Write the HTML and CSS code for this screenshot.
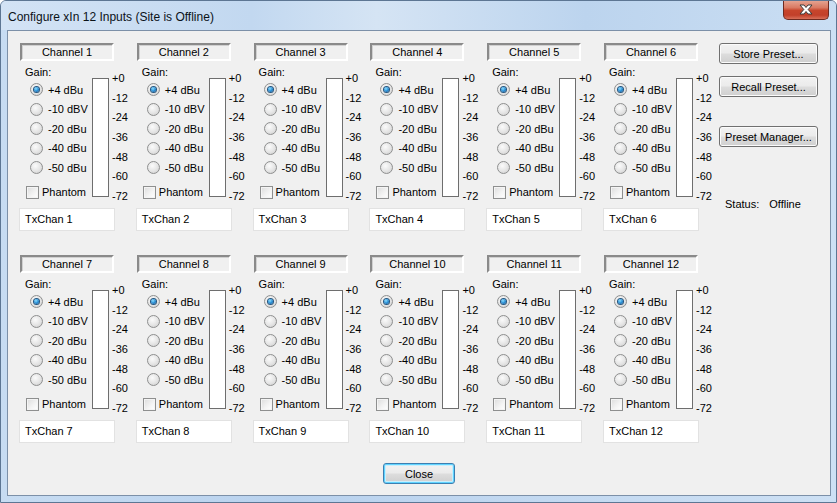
FILE: index.html
```html
<!DOCTYPE html>
<html lang="en">
<head>
    <meta charset="UTF-8">
    <title>Configure xIn 12 Inputs</title>
    <link rel="stylesheet" href="styles.css">
</head>
<body>
<div class="window">
    <div class="titlebar">
        <span class="title">Configure xIn 12 Inputs (Site is Offline)</span>
        <span class="close-x">
            <svg width="14" height="11" viewBox="0 0 14 11">
                <path d="M1 1 H5 L7 3.5 L9 1 H13 L9.2 5.5 L13 10 H9 L7 7.5 L5 10 H1 L4.8 5.5 Z" fill="#fff" stroke="#3a3a3a" stroke-width="1" stroke-linejoin="round"/>
            </svg>
        </span>
    </div>
    <div class="client">
        <div class="content">
            <div class="channels">

                <div class="channel">
                    <div class="ch-name">Channel 1</div>
                    <div class="ch-body">
                        <div class="gain">
                            <div class="gain-title">Gain:</div>
                            <div class="opt"><span class="radio on"></span>+4 dBu</div>
                            <div class="opt"><span class="radio"></span>-10 dBV</div>
                            <div class="opt"><span class="radio"></span>-20 dBu</div>
                            <div class="opt"><span class="radio"></span>-40 dBu</div>
                            <div class="opt"><span class="radio"></span>-50 dBu</div>
                            <div class="phantom"><span class="check"></span>Phantom</div>
                        </div>
                        <div class="meter"></div>
                        <div class="scale"><span>+0</span><span>-12</span><span>-24</span><span>-36</span><span>-48</span><span>-60</span><span>-72</span></div>
                    </div>
                    <div class="tx">TxChan 1</div>
                </div>

                <div class="channel">
                    <div class="ch-name">Channel 2</div>
                    <div class="ch-body">
                        <div class="gain">
                            <div class="gain-title">Gain:</div>
                            <div class="opt"><span class="radio on"></span>+4 dBu</div>
                            <div class="opt"><span class="radio"></span>-10 dBV</div>
                            <div class="opt"><span class="radio"></span>-20 dBu</div>
                            <div class="opt"><span class="radio"></span>-40 dBu</div>
                            <div class="opt"><span class="radio"></span>-50 dBu</div>
                            <div class="phantom"><span class="check"></span>Phantom</div>
                        </div>
                        <div class="meter"></div>
                        <div class="scale"><span>+0</span><span>-12</span><span>-24</span><span>-36</span><span>-48</span><span>-60</span><span>-72</span></div>
                    </div>
                    <div class="tx">TxChan 2</div>
                </div>

                <div class="channel">
                    <div class="ch-name">Channel 3</div>
                    <div class="ch-body">
                        <div class="gain">
                            <div class="gain-title">Gain:</div>
                            <div class="opt"><span class="radio on"></span>+4 dBu</div>
                            <div class="opt"><span class="radio"></span>-10 dBV</div>
                            <div class="opt"><span class="radio"></span>-20 dBu</div>
                            <div class="opt"><span class="radio"></span>-40 dBu</div>
                            <div class="opt"><span class="radio"></span>-50 dBu</div>
                            <div class="phantom"><span class="check"></span>Phantom</div>
                        </div>
                        <div class="meter"></div>
                        <div class="scale"><span>+0</span><span>-12</span><span>-24</span><span>-36</span><span>-48</span><span>-60</span><span>-72</span></div>
                    </div>
                    <div class="tx">TxChan 3</div>
                </div>

                <div class="channel">
                    <div class="ch-name">Channel 4</div>
                    <div class="ch-body">
                        <div class="gain">
                            <div class="gain-title">Gain:</div>
                            <div class="opt"><span class="radio on"></span>+4 dBu</div>
                            <div class="opt"><span class="radio"></span>-10 dBV</div>
                            <div class="opt"><span class="radio"></span>-20 dBu</div>
                            <div class="opt"><span class="radio"></span>-40 dBu</div>
                            <div class="opt"><span class="radio"></span>-50 dBu</div>
                            <div class="phantom"><span class="check"></span>Phantom</div>
                        </div>
                        <div class="meter"></div>
                        <div class="scale"><span>+0</span><span>-12</span><span>-24</span><span>-36</span><span>-48</span><span>-60</span><span>-72</span></div>
                    </div>
                    <div class="tx">TxChan 4</div>
                </div>

                <div class="channel">
                    <div class="ch-name">Channel 5</div>
                    <div class="ch-body">
                        <div class="gain">
                            <div class="gain-title">Gain:</div>
                            <div class="opt"><span class="radio on"></span>+4 dBu</div>
                            <div class="opt"><span class="radio"></span>-10 dBV</div>
                            <div class="opt"><span class="radio"></span>-20 dBu</div>
                            <div class="opt"><span class="radio"></span>-40 dBu</div>
                            <div class="opt"><span class="radio"></span>-50 dBu</div>
                            <div class="phantom"><span class="check"></span>Phantom</div>
                        </div>
                        <div class="meter"></div>
                        <div class="scale"><span>+0</span><span>-12</span><span>-24</span><span>-36</span><span>-48</span><span>-60</span><span>-72</span></div>
                    </div>
                    <div class="tx">TxChan 5</div>
                </div>

                <div class="channel">
                    <div class="ch-name">Channel 6</div>
                    <div class="ch-body">
                        <div class="gain">
                            <div class="gain-title">Gain:</div>
                            <div class="opt"><span class="radio on"></span>+4 dBu</div>
                            <div class="opt"><span class="radio"></span>-10 dBV</div>
                            <div class="opt"><span class="radio"></span>-20 dBu</div>
                            <div class="opt"><span class="radio"></span>-40 dBu</div>
                            <div class="opt"><span class="radio"></span>-50 dBu</div>
                            <div class="phantom"><span class="check"></span>Phantom</div>
                        </div>
                        <div class="meter"></div>
                        <div class="scale"><span>+0</span><span>-12</span><span>-24</span><span>-36</span><span>-48</span><span>-60</span><span>-72</span></div>
                    </div>
                    <div class="tx">TxChan 6</div>
                </div>

                <div class="channel">
                    <div class="ch-name">Channel 7</div>
                    <div class="ch-body">
                        <div class="gain">
                            <div class="gain-title">Gain:</div>
                            <div class="opt"><span class="radio on"></span>+4 dBu</div>
                            <div class="opt"><span class="radio"></span>-10 dBV</div>
                            <div class="opt"><span class="radio"></span>-20 dBu</div>
                            <div class="opt"><span class="radio"></span>-40 dBu</div>
                            <div class="opt"><span class="radio"></span>-50 dBu</div>
                            <div class="phantom"><span class="check"></span>Phantom</div>
                        </div>
                        <div class="meter"></div>
                        <div class="scale"><span>+0</span><span>-12</span><span>-24</span><span>-36</span><span>-48</span><span>-60</span><span>-72</span></div>
                    </div>
                    <div class="tx">TxChan 7</div>
                </div>

                <div class="channel">
                    <div class="ch-name">Channel 8</div>
                    <div class="ch-body">
                        <div class="gain">
                            <div class="gain-title">Gain:</div>
                            <div class="opt"><span class="radio on"></span>+4 dBu</div>
                            <div class="opt"><span class="radio"></span>-10 dBV</div>
                            <div class="opt"><span class="radio"></span>-20 dBu</div>
                            <div class="opt"><span class="radio"></span>-40 dBu</div>
                            <div class="opt"><span class="radio"></span>-50 dBu</div>
                            <div class="phantom"><span class="check"></span>Phantom</div>
                        </div>
                        <div class="meter"></div>
                        <div class="scale"><span>+0</span><span>-12</span><span>-24</span><span>-36</span><span>-48</span><span>-60</span><span>-72</span></div>
                    </div>
                    <div class="tx">TxChan 8</div>
                </div>

                <div class="channel">
                    <div class="ch-name">Channel 9</div>
                    <div class="ch-body">
                        <div class="gain">
                            <div class="gain-title">Gain:</div>
                            <div class="opt"><span class="radio on"></span>+4 dBu</div>
                            <div class="opt"><span class="radio"></span>-10 dBV</div>
                            <div class="opt"><span class="radio"></span>-20 dBu</div>
                            <div class="opt"><span class="radio"></span>-40 dBu</div>
                            <div class="opt"><span class="radio"></span>-50 dBu</div>
                            <div class="phantom"><span class="check"></span>Phantom</div>
                        </div>
                        <div class="meter"></div>
                        <div class="scale"><span>+0</span><span>-12</span><span>-24</span><span>-36</span><span>-48</span><span>-60</span><span>-72</span></div>
                    </div>
                    <div class="tx">TxChan 9</div>
                </div>

                <div class="channel">
                    <div class="ch-name">Channel 10</div>
                    <div class="ch-body">
                        <div class="gain">
                            <div class="gain-title">Gain:</div>
                            <div class="opt"><span class="radio on"></span>+4 dBu</div>
                            <div class="opt"><span class="radio"></span>-10 dBV</div>
                            <div class="opt"><span class="radio"></span>-20 dBu</div>
                            <div class="opt"><span class="radio"></span>-40 dBu</div>
                            <div class="opt"><span class="radio"></span>-50 dBu</div>
                            <div class="phantom"><span class="check"></span>Phantom</div>
                        </div>
                        <div class="meter"></div>
                        <div class="scale"><span>+0</span><span>-12</span><span>-24</span><span>-36</span><span>-48</span><span>-60</span><span>-72</span></div>
                    </div>
                    <div class="tx">TxChan 10</div>
                </div>

                <div class="channel">
                    <div class="ch-name">Channel 11</div>
                    <div class="ch-body">
                        <div class="gain">
                            <div class="gain-title">Gain:</div>
                            <div class="opt"><span class="radio on"></span>+4 dBu</div>
                            <div class="opt"><span class="radio"></span>-10 dBV</div>
                            <div class="opt"><span class="radio"></span>-20 dBu</div>
                            <div class="opt"><span class="radio"></span>-40 dBu</div>
                            <div class="opt"><span class="radio"></span>-50 dBu</div>
                            <div class="phantom"><span class="check"></span>Phantom</div>
                        </div>
                        <div class="meter"></div>
                        <div class="scale"><span>+0</span><span>-12</span><span>-24</span><span>-36</span><span>-48</span><span>-60</span><span>-72</span></div>
                    </div>
                    <div class="tx">TxChan 11</div>
                </div>

                <div class="channel">
                    <div class="ch-name">Channel 12</div>
                    <div class="ch-body">
                        <div class="gain">
                            <div class="gain-title">Gain:</div>
                            <div class="opt"><span class="radio on"></span>+4 dBu</div>
                            <div class="opt"><span class="radio"></span>-10 dBV</div>
                            <div class="opt"><span class="radio"></span>-20 dBu</div>
                            <div class="opt"><span class="radio"></span>-40 dBu</div>
                            <div class="opt"><span class="radio"></span>-50 dBu</div>
                            <div class="phantom"><span class="check"></span>Phantom</div>
                        </div>
                        <div class="meter"></div>
                        <div class="scale"><span>+0</span><span>-12</span><span>-24</span><span>-36</span><span>-48</span><span>-60</span><span>-72</span></div>
                    </div>
                    <div class="tx">TxChan 12</div>
                </div>

            </div>
            <div class="side">
                <button class="btn">Store Preset...</button>
                <button class="btn recall">Recall Preset...</button>
                <button class="btn manager">Preset Manager...</button>
                <div class="status"><span>Status:</span><span>Offline</span></div>
            </div>
        </div>
        <div class="footer">
            <button class="btn default">Close</button>
        </div>
    </div>
</div>
</body>
</html>
```

FILE: styles.css
```css
body {
    margin: 0;
    font-family: "Liberation Sans", Arial, sans-serif;
    font-size: 11px;
    color: #000;
}
.window {
    width: 837px;
    height: 503px;
    box-sizing: border-box;
    border: 1px solid #5d7693;
    border-radius: 6px 6px 0 0;
    background: linear-gradient(90deg, #c7dcf2 0%, #b9d2ee 35%, #c3d9f1 65%, #cde0f4 100%);
    display: flex;
    flex-direction: column;
    overflow: hidden;
}
.titlebar {
    height: 29px;
    display: flex;
    align-items: flex-start;
    background: linear-gradient(90deg, #d3e3f5 0%, #c2d8f0 30%, #d5e4f4 45%, #bcd4ee 70%, #cadef3 100%);
}
.title {
    margin: 8px 0 0 7px;
    font-size: 12px;
    line-height: 16px;
    color: #0b1218;
}
.close-x {
    margin: -1px 7px 0 auto;
    width: 46px;
    height: 20px;
    box-sizing: border-box;
    border: 1px solid #6e2a20;
    border-top: none;
    border-radius: 0 0 5px 5px;
    background: linear-gradient(#e6a896 0%, #d97a63 40%, #c7452c 55%, #c2402a 80%, #d8705a 100%);
    display: flex;
    align-items: center;
    justify-content: center;
}
.client {
    margin: 0 5px 0 6px;
    height: 466px;
    box-sizing: border-box;
    border: 1px solid #7c90a8;
    background: #f0f0f0;
    display: flex;
    flex-direction: column;
}
.content {
    display: flex;
    padding: 12px 0 0 12px;
}
.channels {
    display: grid;
    grid-template-columns: repeat(6, 116.8px);
    row-gap: 24px;
    width: 699px;
    flex: none;
}
.channel {
    width: 97px;
}
.ch-name {
    width: 94px;
    height: 18px;
    box-sizing: border-box;
    border: 2px solid;
    border-color: #8a8a8a #fff #fff #8a8a8a;
    box-shadow: inset 1px 1px 0 #d0d0d0;
    text-align: center;
    line-height: 14px;
}
.ch-body {
    display: flex;
    height: 142px;
    margin-top: 5px;
    white-space: nowrap;
}
.ch-body > div {
    flex: none;
}
.gain {
    width: 72px;
}
.gain-title {
    height: 14px;
    line-height: 13px;
    padding-left: 5px;
}
.opt {
    height: 19.5px;
    display: flex;
    align-items: center;
    padding-left: 10px;
}
.radio {
    flex: none;
    width: 13px;
    height: 13px;
    box-sizing: border-box;
    border: 1px solid #8e8f8f;
    border-radius: 50%;
    background: radial-gradient(circle at 40% 35%, #fbfbfb 0%, #e4e4e4 55%, #c9c9c9 100%);
    margin-right: 5px;
    display: flex;
    align-items: center;
    justify-content: center;
}
.radio.on::after {
    content: "";
    width: 5px;
    height: 5px;
    border-radius: 50%;
    background: radial-gradient(circle at 40% 35%, #8ee0ff 0%, #2a8fd6 50%, #0d4e8c 100%);
    box-shadow: 0 0 0 1px #25567f;
}
.phantom {
    height: 15px;
    margin-top: 7px;
    display: flex;
    align-items: center;
    padding-left: 6px;
}
.check {
    flex: none;
    width: 13px;
    height: 13px;
    box-sizing: border-box;
    border: 1px solid #8e8f8f;
    background: linear-gradient(135deg, #dcdcdc 0%, #f4f4f4 60%, #fff 100%);
    box-shadow: inset 0 0 0 1px #f4f4f4;
    margin-right: 3px;
}
.meter {
    width: 17px;
    height: 119px;
    margin-top: 12px;
    box-sizing: border-box;
    border: 1px solid #6e6e6e;
    background: #fff;
}
.scale {
    margin: 3px 0 0 3px;
    display: flex;
    flex-direction: column;
}
.scale span {
    height: 19.67px;
    line-height: 19.67px;
}
.tx {
    width: 96px;
    height: 23px;
    margin-left: -1px;
    box-sizing: border-box;
    border: 1px solid #e2e2e2;
    background: #fff;
    padding-left: 5px;
    line-height: 21px;
}
.side {
    display: flex;
    flex-direction: column;
    align-items: flex-start;
}
.btn {
    width: 99px;
    height: 21px;
    padding: 0;
    border: 1px solid #707070;
    border-radius: 3px;
    background: linear-gradient(#f2f2f2 0%, #ebebeb 48%, #dddddd 52%, #cfcfcf 100%);
    box-shadow: inset 0 0 0 1px #fbfbfb;
    font-family: inherit;
    font-size: 11px;
    color: #000;
}
.recall {
    margin-top: 12px;
}
.manager {
    margin-top: 29px;
}
.status {
    margin: 51px 0 0 6px;
    display: flex;
    gap: 10px;
    line-height: 13px;
}
.footer {
    display: flex;
    justify-content: center;
    margin-top: 20px;
}
.btn.default {
    width: 72px;
    border-color: #3c7fb1;
    box-shadow: inset 0 0 0 1px #5fd3ff, inset 0 0 0 2px #c9eefc;
}
```
